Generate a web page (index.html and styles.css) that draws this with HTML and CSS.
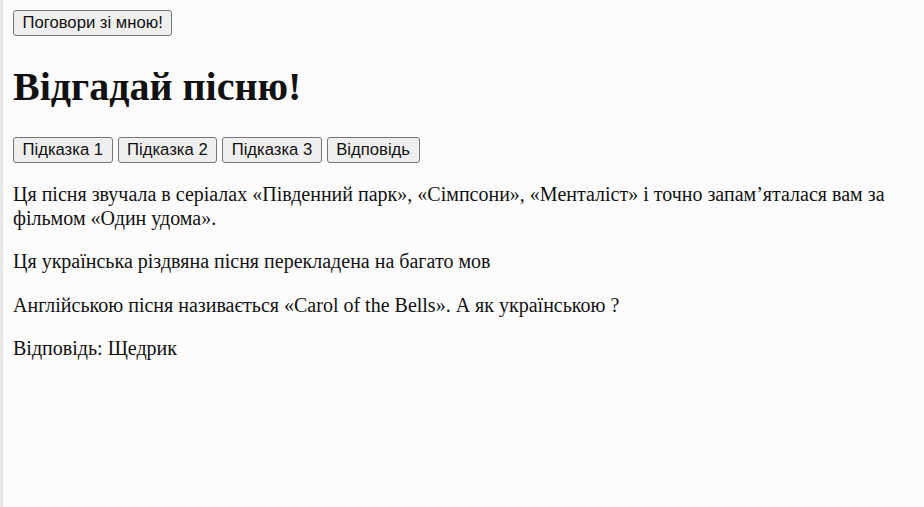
FILE: index.html
```html
<!DOCTYPE html>
<html lang="uk">
<head>
<meta charset="utf-8">
<title>Відгадай пісню!</title>
<link rel="stylesheet" href="styles.css">
</head>
<body>
<button class="btn">Поговори зі мною!</button>
<h1 class="title">Відгадай пісню!</h1>
<div class="hints">
<button class="btn">Підказка 1</button>
<button class="btn">Підказка 2</button>
<button class="btn">Підказка 3</button>
<button class="btn">Відповідь</button>
</div>
<p class="text">Ця пісня звучала в серіалах «Південний парк», «Сімпсони», «Менталіст» і точно запам’яталася вам за фільмом «Один удома».</p>
<p class="text">Ця українська різдвяна пісня перекладена на багато мов</p>
<p class="text">Англійською пісня називається «Carol of the Bells». А як українською ?</p>
<p class="text">Відповідь: Щедрик</p>
</body>
</html>
```
FILE: styles.css
```css
html {
  background: #fcfcfc;
  border-left: 3px solid #e8e9eb;
  min-height: 100%;
}
body {
  margin: 10px;
  font-family: "Liberation Serif", "Times New Roman", serif;
  font-size: 20px;
  color: #111;
}
.btn {
  font-family: "Liberation Sans", Arial, sans-serif;
  font-size: 16.67px;
  color: #111;
  background: #efefef;
  border: 1px solid #767676;
  border-radius: 3px;
  padding: 2px 8.5px;
  margin: 0;
  height: 26px;
  line-height: 20px;
  vertical-align: top;
}
.title {
  font-size: 40px;
  font-weight: bold;
  margin: 27px 0;
}
.hints {
  margin: 0;
}
.text {
  margin: 20px 0;
  line-height: 23.6px;
}
```
